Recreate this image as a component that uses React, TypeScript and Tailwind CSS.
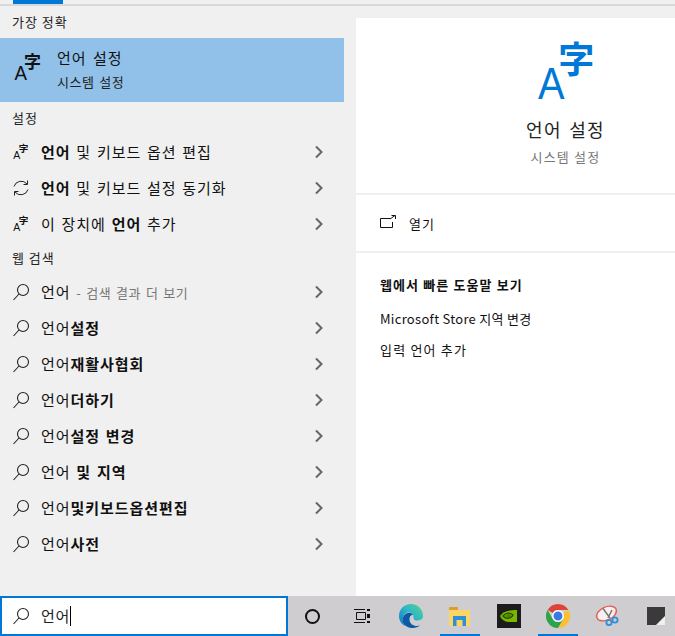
import { ReactNode } from "react";

const font = "font-['Noto_Sans_CJK_KR','Noto_Sans',sans-serif]";

const LangIcon = ({ color = "#111", className = "" }: { color?: string; className?: string }) => (
  <svg viewBox="0 0 32 32" className={`overflow-visible ${className}`}>
    <text x="0.5" y="28.5" fontSize="21" textLength={12.5} lengthAdjust="spacingAndGlyphs" fill={color} fontFamily="Liberation Sans, sans-serif">A</text>
    <text x="10" y="16.5" fontSize="17" fontWeight="700" fill={color} fontFamily="Noto Sans CJK KR, sans-serif">字</text>
  </svg>
);

const SyncIcon = () => (
  <svg viewBox="0 0 18 18" className="w-[18px] h-[18px]" fill="none" stroke="#222" strokeWidth="1">
    <path d="M2 7.5 A7.5 7.5 0 0 1 15 5" />
    <path d="M15.5 1.5 V5.5 H11.5" />
    <path d="M16 10.5 A7.5 7.5 0 0 1 3 13" />
    <path d="M2.5 16.5 V12.5 H6.5" />
  </svg>
);

const SearchIcon = () => (
  <svg viewBox="0 0 18 18" className="w-[18px] h-[18px]" fill="none" stroke="#222" strokeWidth="1.1">
    <circle cx="11" cy="7" r="5.5" />
    <path d="M7 11 L1.5 17" />
  </svg>
);

const Chevron = () => (
  <svg viewBox="0 0 10 14" className="w-[10px] h-[14px]" fill="none" stroke="#666" strokeWidth="2">
    <path d="M2 1.5 L7.5 7 L2 12.5" />
  </svg>
);

const Header = ({ children, className }: { children: ReactNode; className: string }) => (
  <div className={`${className} flex items-center pl-[12px] text-[13px] tracking-[1px] text-[#222]`}>{children}</div>
);

const Row = ({ icon, children }: { icon: ReactNode; children: ReactNode }) => (
  <div className="h-[36px] flex items-center">
    <div className="w-[41px] shrink-0 pl-[12px] flex items-center">{icon}</div>
    <div className="flex-1 text-[15px] tracking-[0.95px] [word-spacing:1.5px] text-[#111] whitespace-nowrap">{children}</div>
    <div className="w-[42px] shrink-0">
      <Chevron />
    </div>
  </div>
);

const B = ({ children }: { children: ReactNode }) => <span className="font-bold">{children}</span>;

const small = <LangIcon className="w-[18px] h-[18px] ml-[1px] -mt-[1px]" />;

const webRows: ReactNode[] = [
  <>언어 <span className="text-[13px] tracking-[0.5px] text-[#777]">- 검색 결과 더 보기</span></>,
  <>언어<B>설정</B></>,
  <>언어<B>재활사협회</B></>,
  <>언어<B>더하기</B></>,
  <>언어<B>설정 변경</B></>,
  <>언어 <B>및 지역</B></>,
  <>언어<B>및키보드옵션편집</B></>,
  <>언어<B>사전</B></>,
];

const Slot = ({ children, active }: { children: ReactNode; active?: boolean }) => (
  <div className="w-[49px] shrink-0 h-full flex items-center justify-center relative">
    {children}
    {active && <div className="absolute bottom-0 left-[5px] w-[40px] h-[2px] bg-[#0078d7]" />}
  </div>
);

export default function App() {
  return (
    <div className={`w-[675px] h-[636px] flex flex-col overflow-hidden bg-[#f0f0f0] ${font}`}>
      <div className="h-[12px] shrink-0">
        <div className="h-[6px] border-b-2 border-[#d8d8d8]">
          <div className="ml-[13px] w-[50px] h-[4px] bg-[#0078d7]" />
        </div>
      </div>

      <div className="flex-1 flex min-h-0">
        <div className="w-[356px] shrink-0">
          <Header className="h-[26px] pb-[6px]">가장 정확</Header>
          <div className="w-[344px] h-[64px] bg-[#91c0e8] flex items-center">
            <div className="w-[57px] pl-[14px] -mt-[6px]">
              <LangIcon className="w-[32px] h-[32px]" />
            </div>
            <div>
              <div className="text-[15px] leading-[22px] tracking-[1px] [word-spacing:2px] text-[#111]">언어 설정</div>
              <div className="text-[13px] leading-[24px] mt-[1px] tracking-[0.6px] [word-spacing:1px] text-[#222]">시스템 설정</div>
            </div>
          </div>
          <Header className="h-[32px]">설정</Header>
          <Row icon={small}><B>언어</B> 및 키보드 옵션 편집</Row>
          <Row icon={<SyncIcon />}><B>언어</B> 및 키보드 설정 동기화</Row>
          <Row icon={small}>이 장치에 <B>언어</B> 추가</Row>
          <Header className="h-[32px]">웹 검색</Header>
          {webRows.map((r, i) => (
            <Row key={i} icon={<SearchIcon />}>{r}</Row>
          ))}
        </div>

        <div className="w-[419px] shrink-0 mt-[6px] bg-white">
          <div className="h-[177px] border-b-2 border-[#f0f0f0] flex flex-col items-center pt-[20px]">
            <LangIcon color="#0078d7" className="w-[68px] h-[68px] ml-[10px]" />
            <div className="mt-[10px] text-[18px] leading-[26px] tracking-[1.3px] [word-spacing:2px] text-[#222]">언어 설정</div>
            <div className="mt-[5px] text-[13px] leading-[20px] tracking-[1.2px] text-[#777]">시스템 설정</div>
          </div>
          <div className="h-[58px] border-b-2 border-[#f0f0f0] flex items-center pl-[24px]">
            <svg viewBox="0 0 16 13" className="w-[16px] h-[13px] -mt-[3px]" fill="none" stroke="#111" strokeWidth="1">
              <path d="M10 3.5 H0.5 V12.5 H12.5 V7" />
              <path d="M10 4 L15 0.5 M11.5 0.5 H15.5 V4" />
            </svg>
            <span className="ml-[13px] mt-[1px] text-[13px] tracking-[1px] text-[#111]">열기</span>
          </div>
          <div className="pl-[24px] pt-[22px] text-[13px] text-[#111]">
            <div className="font-bold leading-[20px] tracking-[1.1px]">웹에서 빠른 도움말 보기</div>
            <div className="mt-[14px] leading-[20px] tracking-[0.3px]">Microsoft Store 지역 변경</div>
            <div className="mt-[11px] leading-[20px] tracking-[1.2px]">입력 언어 추가</div>
          </div>
        </div>
      </div>

      <div className="h-[40px] shrink-0 flex bg-[#cfcdd0]">
        <div className="w-[288px] shrink-0 h-full bg-white border-2 border-[#0078d7] flex items-center pl-[10px]">
          <SearchIcon />
          <span className="ml-[11px] text-[15px] tracking-[0.8px] text-[#222]">언어</span>
          <div className="w-[1px] h-[20px] bg-black" />
        </div>
        <Slot>
          <div className="w-[15px] h-[15px] rounded-full border-2 border-[#111]" />
        </Slot>
        <Slot>
          <svg viewBox="0 0 16 16" className="w-[16px] h-[16px]" fill="none" stroke="#111" strokeWidth="1">
            <path d="M0 1.5 H11 M0 14.5 H11 M2.5 4.5 H11.5 V11.5 H2.5 Z" />
            <rect x="13" y="1" width="3" height="2" fill="#111" stroke="none" />
            <rect x="13" y="6" width="3" height="4" fill="#111" stroke="none" />
            <rect x="13" y="13" width="3" height="2" fill="#111" stroke="none" />
          </svg>
        </Slot>
        <Slot>
          <svg viewBox="0 0 24 24" className="w-[24px] h-[24px]">
            <defs>
              <linearGradient id="edgeTop" x1="0" y1="1" x2="1" y2="0">
                <stop offset="0" stopColor="#1273c4" />
                <stop offset="0.55" stopColor="#2fb8c8" />
                <stop offset="1" stopColor="#5fd47e" />
              </linearGradient>
            </defs>
            <path d="M12 0 C19 0 24 5 24 12 C24 15.5 21 16.5 17.5 16.5 C14 16.5 15 13.5 14 11 C13 8 9 7.5 6.5 9.5 C3 12 3 18 6 22 C2.5 20 0 16.5 0 12 C0 5 5 0 12 0 Z" fill="url(#edgeTop)" />
            <path d="M9.5 8.8 C5 9.5 3 14 4 18 C5 22 10 24 14 24 C16.5 24 19 23 21 21.5 C16 23 11 21 10.5 16 C10.2 13 11.5 11 14 10.8 C13 9.2 11.5 8.5 9.5 8.8 Z" fill="#0c59a4" />
          </svg>
        </Slot>
        <Slot active>
          <svg viewBox="0 0 22 19" className="w-[22px] h-[19px]">
            <path d="M0 1 a1 1 0 0 1 1-1 H9 V3 H0 Z" fill="#d9a02c" />
            <rect x="0" y="3" width="21" height="16" fill="#fbd667" />
            <path d="M4 9 H17 V19 H13.5 V13 H7.5 V19 H4 Z" fill="#2f8fd8" />
          </svg>
        </Slot>
        <Slot>
          <svg viewBox="0 0 24 24" className="w-[24px] h-[24px]" fill="none">
            <rect width="24" height="24" fill="#1c1c1c" />
            <path d="M3 12 C6 7 12 6 20 6 V18 H13 C8 18 5 16 3 12 Z" fill="#76b900" />
            <path d="M6 12 C9 8.5 13 8 16 11 C14 15 9 15.5 6 12 Z" stroke="#2c4a00" strokeWidth="1.3" />
            <path d="M9.5 12 C11 10.5 12.5 10.5 13.5 12 C12.5 13.5 11 13.5 9.5 12 Z" stroke="#2c4a00" strokeWidth="1" />
          </svg>
        </Slot>
        <Slot active>
          <svg viewBox="0 0 24 24" className="w-[24px] h-[24px]">
            <path d="M12 0 A12 12 0 0 1 22.4 6 H12 A6 6 0 0 0 6.8 9 L1.6 6 A12 12 0 0 1 12 0 Z" fill="#dc4437" />
            <path d="M22.4 6 A12 12 0 0 1 12 24 L17.2 15 A6 6 0 0 0 17.2 9 Z" fill="#fbc02d" />
            <path d="M1.6 6 L6.8 15 A6 6 0 0 0 17.2 15 L12 24 A12 12 0 0 1 1.6 6 Z" fill="#2fa24c" />
            <circle cx="12" cy="12" r="5.2" fill="#3b78e7" stroke="#fff" strokeWidth="1.4" />
          </svg>
        </Slot>
        <Slot>
          <svg viewBox="0 0 24 24" className="w-[24px] h-[24px]" fill="none">
            <ellipse cx="11.5" cy="9.5" rx="10.5" ry="6.5" transform="rotate(-25 11.5 9.5)" fill="#f7eeee" stroke="#e0605c" strokeWidth="1.4" />
            <path d="M8 4.5 L15 14 M17 6 L13 14" stroke="#777" strokeWidth="1.5" />
            <circle cx="14" cy="18.5" r="2.6" stroke="#2f8fd8" strokeWidth="1.8" />
            <circle cx="20" cy="16" r="2.6" stroke="#2f8fd8" strokeWidth="1.8" />
          </svg>
        </Slot>
        <Slot>
          <svg viewBox="0 0 18 18" className="w-[18px] h-[18px]">
            <rect width="18" height="18" fill="#3a3a3a" />
            <path d="M18 9 V18 H9 Z" fill="#f0f0f0" />
          </svg>
        </Slot>
      </div>
    </div>
  );
}
